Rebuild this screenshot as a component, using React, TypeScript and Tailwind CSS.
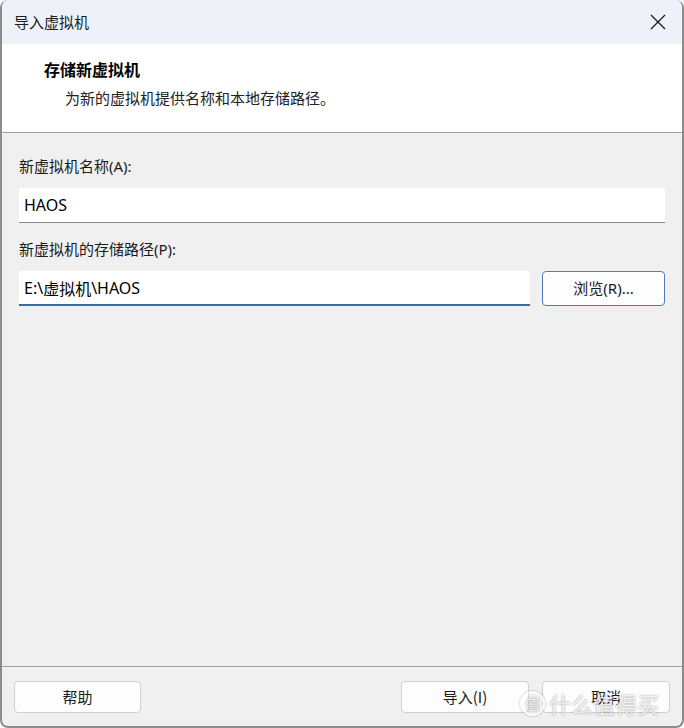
import React from 'react';

const font = { fontFamily: '"Segoe UI", "Noto Sans", "Noto Sans CJK SC", sans-serif' };
const cjk = { fontFamily: '"Noto Sans CJK SC", sans-serif' };

function WinButton({ children, className = '' }: { children: React.ReactNode; className?: string }) {
  return (
    <button
      className={`h-[32px] rounded-[4px] border border-[#d0d0d0] bg-[#fdfdfd] text-[15px] text-[#1a1a1a] ${className}`}
    >
      {children}
    </button>
  );
}

export default function App() {
  return (
    <div
      className="relative w-[684px] h-[728px] overflow-hidden rounded-[8px] border-l-2 border-r-2 border-b-2 border-[#8c8c8c] bg-[#f0f0f0] flex flex-col"
      style={cjk}
    >
      {/* Title bar */}
      <div className="h-[44px] shrink-0 bg-[#eef1f7] flex items-center justify-between pl-[12px] pr-[16px]">
        <span className="text-[15px] text-[#1b1b1b]">导入虚拟机</span>
        <svg width="16" height="16" viewBox="0 0 16 16" className="text-[#1b1b1b]">
          <path d="M1 1 L15 15 M15 1 L1 15" stroke="currentColor" strokeWidth="1.3" fill="none" />
        </svg>
      </div>

      {/* Header */}
      <div className="h-[89px] shrink-0 bg-white border-b border-[#a0a0a0] pt-[14px] pl-[42px]">
        <div className="text-[16px] font-bold leading-[22px] text-black">存储新虚拟机</div>
        <div className="pl-[21px] mt-[8px] text-[15px] leading-[20px] text-[#222]">为新的虚拟机提供名称和本地存储路径。</div>
      </div>

      {/* Body */}
      <div className="flex-1 px-[17px] pt-[23px]">
        <div className="text-[15px] leading-[20px] text-[#1b1b1b]" style={font}>
          <span style={cjk}>新虚拟机名称</span>(A):
        </div>
        <div
          className="mt-[12px] h-[35px] bg-white border-b border-[#8a8a8a] flex items-center pl-[5px] text-[16px] text-black"
          style={font}
        >
          HAOS
        </div>
        <div className="mt-[16px] text-[15px] leading-[20px] text-[#1b1b1b]" style={font}>
          <span style={cjk}>新虚拟机的存储路径</span>(P):
        </div>
        <div className="mt-[12px] flex gap-[12px]">
          <div
            className="flex-1 h-[35px] bg-white border-b-2 border-[#3f68a8] flex items-center pl-[5px] text-[16px] text-black"
            style={font}
          >
            E:\<span style={cjk}>虚拟机</span>\HAOS
          </div>
          <button
            className="w-[123px] h-[35px] rounded-[4px] border border-[#4f7bc0] bg-[#fdfdfd] text-[15px] text-[#1b1b1b]"
            style={font}
          >
            <span style={cjk}>浏览</span>(R)...
          </button>
        </div>
      </div>

      {/* Footer */}
      <div className="h-[60px] shrink-0 border-t border-[#a0a0a0] flex items-start pt-[14px] pl-[12px] pr-[12px]">
        <WinButton className="w-[127px]">帮助</WinButton>
        <div className="flex-1" />
        <WinButton className="w-[128px]">导入(I)</WinButton>
        <WinButton className="w-[128px] ml-[13px]">取消</WinButton>
      </div>

      {/* watermark */}
      <div className="absolute left-[518px] top-[690px] flex items-center gap-[4px] text-[22px] leading-[26px] text-white/80 [text-shadow:0_0_2px_rgba(0,0,0,0.45)] pointer-events-none">
        <span className="w-[25px] h-[25px] rounded-full border-2 border-white/80 shadow-[0_0_2px_rgba(0,0,0,0.4)] flex items-center justify-center text-[15px] leading-none">值</span>
        <span>什么值得买</span>
      </div>
    </div>
  );
}
